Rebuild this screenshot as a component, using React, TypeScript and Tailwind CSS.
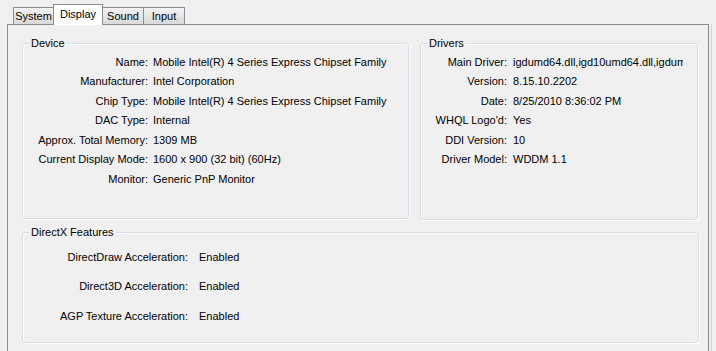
import React from 'react';

type Row = [string, string];

const device: Row[] = [
    ['Name', 'Mobile Intel(R) 4 Series Express Chipset Family'],
    ['Manufacturer', 'Intel Corporation'],
    ['Chip Type', 'Mobile Intel(R) 4 Series Express Chipset Family'],
    ['DAC Type', 'Internal'],
    ['Approx. Total Memory', '1309 MB'],
    ['Current Display Mode', '1600 x 900 (32 bit) (60Hz)'],
    ['Monitor', 'Generic PnP Monitor'],
];

const drivers: Row[] = [
    ['Main Driver', 'igdumd64.dll,igd10umd64.dll,igdumdx32.dll'],
    ['Version', '8.15.10.2202'],
    ['Date', '8/25/2010 8:36:02 PM'],
    ["WHQL Logo'd", 'Yes'],
    ['DDI Version', '10'],
    ['Driver Model', 'WDDM 1.1'],
];

const features: Row[] = [
    ['DirectDraw Acceleration', 'Enabled'],
    ['Direct3D Acceleration', 'Enabled'],
    ['AGP Texture Acceleration', 'Enabled'],
];

function GroupBox({ title, className, children }: { title: string; className: string; children: React.ReactNode }): React.ReactElement {
    return (
        <div className={`relative rounded-[3px] border border-[#d5dfe5] shadow-[1px_1px_0_#fff,inset_1px_1px_0_#fff] ${className}`}>
            <span className="absolute -top-[8px] left-[6px] bg-[#f0f0f0] px-[2px] leading-[14px]">{title}</span>
            {children}
        </div>
    );
}

function Rows({ rows, labelClass, rowClass, valueClass }: { rows: Row[]; labelClass: string; rowClass: string; valueClass: string }): React.ReactElement {
    return (
        <div className="flex flex-col">
            {rows.map(([label, value]) => (
                <div key={label} className={`flex whitespace-nowrap ${rowClass}`}>
                    <span className={`shrink-0 text-right ${labelClass}`}>{label}:</span>
                    <span className={`overflow-hidden ${valueClass}`}>{value}</span>
                </div>
            ))}
        </div>
    );
}

function Tab({ label, active }: { label: string; active?: boolean }): React.ReactElement {
    if (active)
        return (
            <div className="relative z-10 -mb-px -ml-px flex h-[21px] w-[50px] justify-center border border-b-0 border-[#898c95] bg-white pt-[2px]">
                {label}
            </div>
        );
    return (
        <div className="-ml-px flex h-[17px] w-[42px] justify-center border border-b-0 border-[#898c95] bg-linear-to-b from-[#f3f3f3] to-[#d9d9d9] pt-[1px] first:ml-0 first:w-[41px]">
            {label}
        </div>
    );
}

export default function App(): React.ReactElement {
    return (
        <div className="flex h-[351px] w-[716px] flex-col overflow-hidden bg-[#f0f0f0] font-['Liberation_Sans',Arial,sans-serif] text-[11px] leading-[14px] text-black">
            <div className="relative z-10 flex h-[24px] items-end pl-[13px]">
                <Tab label="System" />
                <Tab label="Display" active />
                <Tab label="Sound" />
                <Tab label="Input" />
            </div>
            <div className="flex flex-1">
                <div className="ml-[7px] w-[702px] border border-b-0 border-[#898c95] pl-[14px] pt-[18px]">
                    <div className="flex items-start gap-[11px]">
                        <GroupBox title="Device" className="h-[176px] w-[387px] pt-[8px]">
                            <Rows rows={device} rowClass="h-[19.5px] items-center" labelClass="w-[125px]" valueClass="pl-[5px]" />
                        </GroupBox>
                        <GroupBox title="Drivers" className="h-[177px] w-[278px] pt-[8px]">
                            <Rows rows={drivers} rowClass="h-[19.5px] items-center" labelClass="w-[86px]" valueClass="w-[176px] pl-[6px]" />
                        </GroupBox>
                    </div>
                    <GroupBox title="DirectX Features" className="mt-[12px] h-[111px] w-[677px] pt-[9px]">
                        <Rows rows={features} rowClass="h-[29.5px] items-center" labelClass="w-[165px]" valueClass="pl-[11px]" />
                    </GroupBox>
                </div>
                <div className="ml-[2px] w-px bg-[#d4d4d4]" />
            </div>
        </div>
    );
}
